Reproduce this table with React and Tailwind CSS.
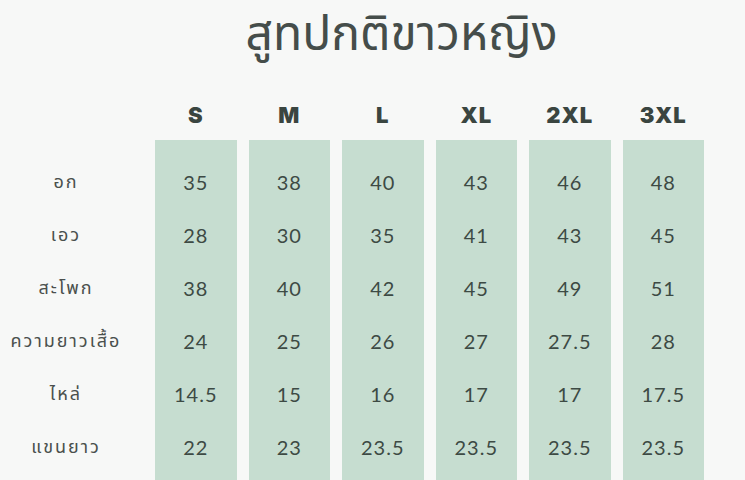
const sizes = ['S', 'M', 'L', 'XL', '2XL', '3XL']

const labels = ['อก', 'เอว', 'สะโพก', 'ความยาวเสื้อ', 'ไหล่', 'แขนยาว']

// values[size][row]
const values = [
  ['35', '28', '38', '24', '14.5', '22'],
  ['38', '30', '40', '25', '15', '23'],
  ['40', '35', '42', '26', '16', '23.5'],
  ['43', '41', '45', '27', '17', '23.5'],
  ['46', '43', '49', '27.5', '17', '23.5'],
  ['48', '45', '51', '28', '17.5', '23.5'],
]

const thai = { fontFamily: '"Noto Sans", "Noto Sans Thai", "Noto Sans CJK SC", sans-serif' }

const App = () => {
  return (
    <div className="w-[745px] h-[480px] overflow-hidden bg-[#f7f8f7] flex flex-col">
      {/* title */}
      <div className="h-[95px] shrink-0 flex justify-center">
        <h1 className="text-[48px] font-normal text-[#454d4a] leading-[64px] ml-[58px]" style={thai}>
          สูทปกติขาวหญิง
        </h1>
      </div>

      <div className="flex gap-[12px] shrink-0">
        {/* labels */}
        <div className="w-[143px] pr-[11px] flex flex-col">
          <div className="h-[45px]" />
          <div className="pt-[15px] flex flex-col">
            {labels.map((l) => (
              <div
                key={l}
                className="h-[53px] flex items-center justify-center text-[18px] tracking-[2px] text-[#4a504d]"
                style={thai}
              >
                {l}
              </div>
            ))}
          </div>
        </div>

        {/* size columns */}
        {sizes.map((s, i) => (
          <div key={s} className="w-[81.5px] flex flex-col">
            <div
              className="h-[45px] pb-[4px] flex items-center justify-center text-[22px] font-black text-[#3a4540] tracking-[1px]"
              style={{ fontFamily: 'Inter, "DejaVu Sans", sans-serif' }}
            >
              {s}
            </div>
            <div className="bg-[#c6ddd0] pt-[15px] pb-[20px] flex flex-col">
              {values[i].map((v, r) => (
                <div
                  key={r}
                  className="h-[53px] flex items-center justify-center text-[20px] text-[#3d4a44] tracking-[1px]"
                  style={{ fontFamily: 'Lato, "Noto Sans", sans-serif' }}
                >
                  {v}
                </div>
              ))}
            </div>
          </div>
        ))}
      </div>
    </div>
  )
}

export default App
